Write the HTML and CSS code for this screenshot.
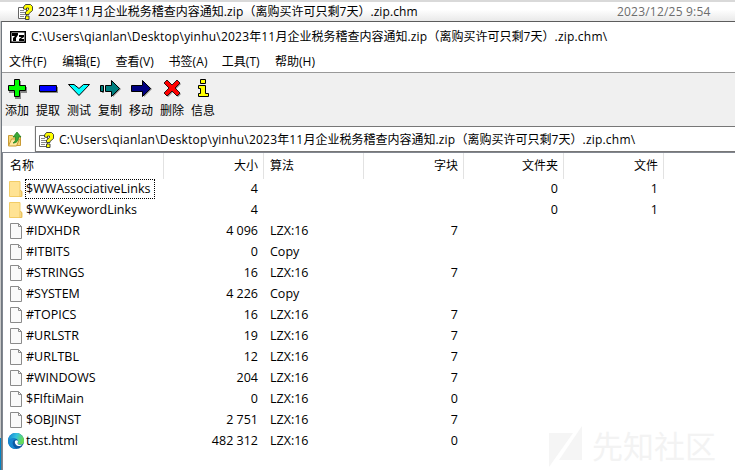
FILE: index.html
```
<!DOCTYPE html>
<html lang="zh-CN">
<head>
<meta charset="utf-8">
<title>7-Zip</title>
<link rel="stylesheet" href="styles.css">
</head>
<body>
<svg width="0" height="0" class="defs">
  <symbol id="chm" viewBox="0 0 16 16">
    <path d="M1.500 3.500h8v11h-8z" fill="#fff" stroke="#666"/>
    <path d="M3 6.500h4M3 8.500h5M3 10.500h5M3 12.500h4" stroke="#888"/>
    <path d="M6.500 5V3l2-2.500h5l2 2v4l-3.500 3v1H8.500V8L11.500 5.500V4h-2v1.500zM8.500 12h3.500v3.500H8.500z" fill="#ff0" stroke="#333" stroke-width=".9"/>
  </symbol>
  <symbol id="folder" viewBox="0 0 14 16">
    <path d="M.5.5h10.500v9l2 1v5H.5z" fill="#ffe394" stroke="#f2cc66"/>
    <path d="M11 9.500l1.500.5v5.500H11z" fill="#ffe9a6" stroke="#e5b84d" stroke-width=".7"/>
  </symbol>
  <symbol id="file" viewBox="0 0 12 16">
    <path d="M.5.5h8l3 3v12H.5z" fill="#fafafa" stroke="#8b8b8b"/>
    <path d="M8.500.5v3h3" fill="none" stroke="#8b8b8b"/>
  </symbol>
  <symbol id="edge" viewBox="0 0 16 16">
    <linearGradient id="eg" x1="0" y1="0" x2="1" y2=".3"><stop offset=".1" stop-color="#1788d1"/><stop offset=".55" stop-color="#35c1e0"/><stop offset="1" stop-color="#66dc58"/></linearGradient>
    <circle cx="8" cy="8" r="8" fill="#0c59a4"/>
    <path d="M0 8a8 8 0 0 1 16-.5c.2 3-1.500 4-3.500 4-2.500 0-3.500-.8-2.700-1.800C11 8 9.500 5.500 6.500 5.500 3.500 5.500.5 7 0 8z" fill="url(#eg)"/>
    <path d="M0 8c1-3 6-3.500 8-1.500-3 0-4 3-3 5.500s3 4 5 4C4 17 0 13 0 8z" fill="#1686d0"/>
    <path d="M7 8c-.8 3 2 5.500 5 5l3.800-2c-2 1.500-6.800 1-6.300-1C11 8 9 6 7 8z" fill="#fff"/>
  </symbol>
</svg>
<div class="desk">
  <svg class="i16"><use href="#chm"/></svg>
  <span class="name"><i>2023</i>年<i>11</i>月企业税务稽查内容通知<i>.zip</i>（离购买许可只剩<i>7</i>天）<i>.zip.chm</i></span>
  <span class="date">2023/12/25 9:54</span>
</div>
<div class="body">
<div class="edge"><b></b></div>
<div class="win">
  <div class="title">
    <svg width="16" height="12" viewBox="0 0 16 12"><path d="M.75.75h14.500v10.500H.75z" fill="#fff" stroke="#000" stroke-width="1.500"/><path d="M2 2h6v2L6 7v3H3V7l2-2H2zM9 4h5v2l-3 2h3v2H9V8l2.500-2H9z"/></svg>
    <span><i>C:\Users\qianlan\Desktop\yinhu\2023</i>年<i>11</i>月企业税务稽查内容通知<i>.zip</i>（离购买许可只剩<i>7</i>天）<i>.zip.chm\</i></span>
  </div>
  <div class="menu"><span>文件<i>(F)</i></span><span>编辑<i>(E)</i></span><span>查看<i>(V)</i></span><span>书签<i>(A)</i></span><span>工具<i>(T)</i></span><span>帮助<i>(H)</i></span></div>
  <div class="tools">
    <div><svg viewBox="0 0 24 20"><path d="M10 2h6v6h6v6h-6v6h-6v-6H4V8h6z" fill="#888"/><path d="M9.500.5h5v6h6v5h-6v6h-5v-6h-6v-5h6z" fill="#0f0" stroke="#000"/></svg>添加</div>
    <div><svg viewBox="0 0 24 20"><path d="M4 8h18v6H4z" fill="#888"/><path d="M3.500 6.500h17v6h-17z" fill="#00f" stroke="#000"/></svg>提取</div>
    <div><svg viewBox="0 0 24 20"><path d="M1.500 5.500h5.500l5 4 4.500-4H22.500L12 16.500z" fill="#0ff" stroke="#000"/></svg>测试</div>
    <div><svg viewBox="0 0 24 20"><path d="M4 8h2v6H4zM9 8h6V3l8 7-8 8v-5H9z" fill="#888"/><path d="M2.500 6.500h3v6h-3zM7.500 6.500h6v-5l8 8-8 8v-5h-6z" fill="#008080" stroke="#000"/></svg>复制</div>
    <div><svg viewBox="0 0 24 20"><path d="M4 8h11V3l8 7-8 8v-5H4z" fill="#888"/><path d="M2.500 6.500h11v-5l8 8-8 8v-5h-11z" fill="#000080" stroke="#000"/></svg>移动</div>
    <div><svg viewBox="0 0 24 20"><path d="M5 4l3-3 5 5 5-5 3 3-5 5 5 5-3 3-5-5-5 5-3-3 5-5z" fill="#888" transform="translate(0 1)"/><path d="M4 4l3-3 5 5 5-5 3 3-5 5 5 5-3 3-5-5-5 5-3-3 5-5z" fill="#f00" stroke="#000" stroke-width=".8"/></svg>删除</div>
    <div><svg viewBox="0 0 24 20"><path d="M9.500.5h5v4h-5zM7.500 6.500h7v8h3v3h-10v-3h2v-5h-2z" fill="#ff0" stroke="#000"/></svg>信息</div>
  </div>
  <div class="addr">
    <div class="up"><svg class="i16" viewBox="0 0 16 16"><path d="M1.500 4.500h4l1 1h7v9h-12z" fill="#f6d778" stroke="#c99b35"/><path d="M1.500 15l3-7h8l-3 7z" fill="#ffe9a0" stroke="#c99b35"/><path d="M6 12c2-1 3-3 2.500-6H6l4-5 4 5h-2.500c0 4-2 6-5.500 6z" fill="#3caa35" stroke="#1c7a1c" stroke-width=".7"/></svg></div>
    <div class="path"><svg class="i16"><use href="#chm"/></svg><span><i>C:\Users\qianlan\Desktop\yinhu\2023</i>年<i>11</i>月企业税务稽查内容通知<i>.zip</i>（离购买许可只剩<i>7</i>天）<i>.zip.chm\</i></span></div>
  </div>
  <div class="list">
    <div class="row head"><span>名称</span><span>大小</span><span>算法</span><span>字块</span><span>文件夹</span><span>文件</span></div>
    <div class="row"><span><svg class="ic"><use href="#folder"/></svg><em class="focus">$WWAssociativeLinks</em></span><span>4</span><span></span><span></span><span>0</span><span>1</span></div>
    <div class="row"><span><svg class="ic"><use href="#folder"/></svg><em>$WWKeywordLinks</em></span><span>4</span><span></span><span></span><span>0</span><span>1</span></div>
    <div class="row"><span><svg class="ic"><use href="#file"/></svg><em>#IDXHDR</em></span><span>4 096</span><span>LZX:16</span><span>7</span></div>
    <div class="row"><span><svg class="ic"><use href="#file"/></svg><em>#ITBITS</em></span><span>0</span><span>Copy</span><span></span></div>
    <div class="row"><span><svg class="ic"><use href="#file"/></svg><em>#STRINGS</em></span><span>16</span><span>LZX:16</span><span>7</span></div>
    <div class="row"><span><svg class="ic"><use href="#file"/></svg><em>#SYSTEM</em></span><span>4 226</span><span>Copy</span><span></span></div>
    <div class="row"><span><svg class="ic"><use href="#file"/></svg><em>#TOPICS</em></span><span>16</span><span>LZX:16</span><span>7</span></div>
    <div class="row"><span><svg class="ic"><use href="#file"/></svg><em>#URLSTR</em></span><span>19</span><span>LZX:16</span><span>7</span></div>
    <div class="row"><span><svg class="ic"><use href="#file"/></svg><em>#URLTBL</em></span><span>12</span><span>LZX:16</span><span>7</span></div>
    <div class="row"><span><svg class="ic"><use href="#file"/></svg><em>#WINDOWS</em></span><span>204</span><span>LZX:16</span><span>7</span></div>
    <div class="row"><span><svg class="ic"><use href="#file"/></svg><em>$FIftiMain</em></span><span>0</span><span>LZX:16</span><span>0</span></div>
    <div class="row"><span><svg class="ic"><use href="#file"/></svg><em>$OBJINST</em></span><span>2 751</span><span>LZX:16</span><span>7</span></div>
    <div class="row"><span><svg class="ic"><use href="#edge"/></svg><em>test.html</em></span><span>482 312</span><span>LZX:16</span><span>0</span></div>
  </div>
</div>
</div>
<div class="mark"><svg width="34" height="42" viewBox="0 0 34 42"><path d="M0 7h24L0 41zM33 0v34H10z" fill="#f5f5f5"/></svg><span>先知社区</span></div>
</body>
</html>
```
FILE: styles.css
```
* { box-sizing: border-box; }
body { margin: 0; width: 735px; height: 470px; overflow: hidden; position: relative; background: #fff; color: #000; font: 12px/16px "Open Sans", "Noto Sans CJK SC", sans-serif; display: flex; flex-direction: column; }
i, em { font-style: normal; }
i { letter-spacing: .1px; }
svg { flex: none; display: block; }
.defs { position: absolute; }
.i16 { width: 16px; height: 16px; }
.desk { height: 21px; display: flex; align-items: center; padding: 0 0 0 17px; background: linear-gradient(90deg, #fff 14px, transparent 14px) 0 -2px / 100% 2px no-repeat border-box, linear-gradient(#fff 40%, #e9e9e9); border-top: 2px solid #d9d9d9; white-space: nowrap; }
.name { margin-left: 5px; width: 579px; }
.date { color: #6d6d6d; letter-spacing: .2px; }
.body { display: flex; height: 449px; }
.edge { width: 1px; background: #c8c8c8; padding-top: 417px; }
.edge b { display: block; height: 32px; background: #0083c4; }
.win { width: 734px; border-left: 1px solid #717880; border-top: 1px solid #5c5c5c; white-space: nowrap; }
.title { height: 27px; display: flex; align-items: center; padding: 3px 0 0 8px; gap: 5px; }
.title i, .path i { letter-spacing: .21px; }
.menu { height: 24px; display: flex; padding: 5px 0 0 7px; border-bottom: 1px solid #999; }
.menu span { width: 53.2px; }
.tools { height: 53px; background: #f0f0f0; display: flex; padding-top: 6px; }
.tools div { width: 31px; margin-left: -.5px; margin-right: .5px; display: flex; flex-direction: column; align-items: center; gap: 4px; }
.tools svg { width: 24px; height: 20px; }
.addr { display: flex; height: 26px; background: #f0f0f0; }
.up { width: 32px; background: #fff; padding: 5px 0 0 5px; }
.path { margin-left: 1px; flex: 1; display: flex; align-items: center; gap: 5px; padding: 1px 0 0 2px; background: #fff; border: solid #777; border-width: 1px 0 1px 1px; }
.list { border-top: 1px solid #828790; border-left: 1px solid #828790; height: 318px; background: #fff; }
.row { display: grid; grid-template-columns: 161px repeat(5, 100px); height: 21px; line-height: 21px; font-size: 12.5px; }
.row > span { text-align: right; padding-right: 6px; }
.row > span:nth-child(3) { text-align: left; padding: 0 0 0 6px; }
.row > span:first-child { display: flex; align-items: center; padding: 0 0 0 5px; text-align: left; }
.head { height: 25px; line-height: 26px; font-size: 12px; }
.head > span { border-right: 1px solid #e2e2e2; padding-right: 5px; }
.head > span:first-child { padding-left: 7px; }
.ic { width: 16px; height: 16px; margin-right: 1px; }
em { height: 20px; line-height: 18px; border: 1px dotted transparent; padding-right: 4px; }
.focus { border-color: #000; }
.mark { position: absolute; left: 549px; top: 426px; display: flex; align-items: center; gap: 9px; color: #f3f3f3; font-size: 31px; line-height: 38px; }
.mark span { padding-bottom: 3px; }
```
